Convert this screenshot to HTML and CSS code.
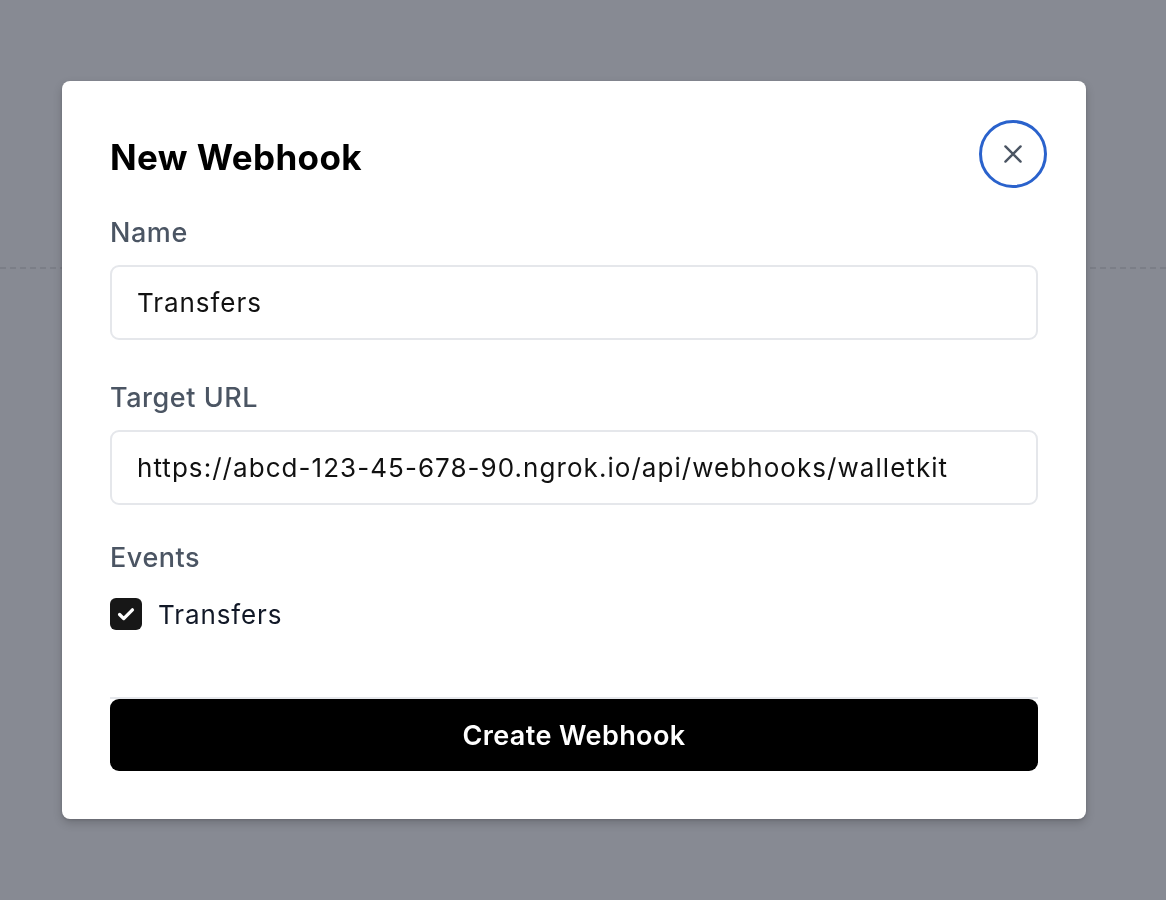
FILE: index.html
```html
<!DOCTYPE html>
<html lang="en">
<head>
<meta charset="utf-8">
<title>New Webhook</title>
<link rel="stylesheet" href="styles.css">
</head>
<body>
<div class="page">
  <div class="page-top"></div>
</div>
<div class="overlay">
  <div class="modal">
    <div class="modal-header">
      <h2 class="modal-title">New Webhook</h2>
      <button class="close-btn" type="button" aria-label="Close">
        <svg width="26" height="26" viewBox="0 0 24 24" fill="none" stroke="#4b5563" stroke-width="2.2" stroke-linecap="round"><path d="M5 5L19 19M19 5L5 19"/></svg>
      </button>
    </div>
    <div class="field">
      <label class="label">Name</label>
      <div class="input">Transfers</div>
    </div>
    <div class="field">
      <label class="label">Target URL</label>
      <div class="input url">https://abcd-123-45-678-90.ngrok.io/api/webhooks/walletkit</div>
    </div>
    <div class="field events">
      <label class="label">Events</label>
      <div class="check-row">
        <span class="checkbox">
          <svg width="22" height="22" viewBox="0 0 24 24" fill="none" stroke="#fff" stroke-width="3.6" stroke-linecap="round" stroke-linejoin="round"><path d="M5 12.5l4.5 4.5L19 7.5"/></svg>
        </span>
        <span class="check-label">Transfers</span>
      </div>
    </div>
    <div class="footer">
      <button class="submit" type="button">Create Webhook</button>
    </div>
  </div>
</div>
</body>
</html>
```
FILE: styles.css
```css
* { box-sizing: border-box; }
html, body { margin: 0; padding: 0; }
body {
  background: #878a93;
  font-family: Inter, "Noto Sans", "Liberation Sans", sans-serif;
  width: 1166px;
  height: 900px;
  overflow: hidden;
}
.page { height: 900px; }
.page-top {
  height: 269px;
  border-bottom: 2px dashed #7b7e87;
}
.overlay {
  position: fixed;
  inset: 0;
  display: flex;
  align-items: center;
  padding-left: 62px;
}
.modal {
  width: 1024px;
  height: 738px;
  background: #fff;
  border-radius: 8px;
  box-shadow: 0 4px 10px rgba(0,0,0,0.18), 0 1px 3px rgba(0,0,0,0.12);
  padding: 39px 48px 48px 48px;
  display: flex;
  flex-direction: column;
}
.modal-header {
  display: flex;
  align-items: center;
  justify-content: space-between;
  height: 68px;
  margin-right: -9px;
  margin-bottom: 25px;
}
.modal-title {
  margin: 6px 0 0 0;
  font-size: 35px;
  font-weight: 700;
  color: #000;
  letter-spacing: 0.4px;
}
.close-btn {
  width: 68px;
  height: 68px;
  border-radius: 50%;
  border: 3px solid #2a62cc;
  background: #fff;
  display: flex;
  align-items: center;
  justify-content: center;
  padding: 0;
}
.field { display: flex; flex-direction: column; }
.label {
  font-size: 27px;
  line-height: 40px;
  font-weight: 500;
  color: #4b5563;
  letter-spacing: 0.55px;
  margin-bottom: 12px;
}
.input {
  height: 75px;
  border: 2px solid #e5e7eb;
  border-radius: 9px;
  padding: 0 25px;
  display: flex;
  align-items: center;
  font-size: 26px;
  letter-spacing: 0.95px;
  color: #111;
  margin-bottom: 38px;
}
.input.url { letter-spacing: 1.05px; }
.field:nth-child(3) .input { margin-bottom: 33px; }
.events .label { margin-bottom: 20px; }
.check-row {
  display: flex;
  align-items: center;
  gap: 16px;
  height: 32px;
}
.checkbox {
  width: 32px;
  height: 32px;
  border-radius: 6px;
  background: #171717;
  display: flex;
  align-items: center;
  justify-content: center;
}
.check-label {
  font-size: 26px;
  letter-spacing: 0.9px;
  color: #111827;
}
.footer {
  margin-top: auto;
  border-top: 2px solid #e5e7eb;
}
.submit {
  width: 100%;
  height: 72px;
  background: #000;
  color: #fff;
  border: none;
  border-radius: 9px;
  font-family: Inter, "Noto Sans", "Liberation Sans", sans-serif;
  font-size: 27px;
  font-weight: 600;
  letter-spacing: 0.4px;
  display: block;
}
```
